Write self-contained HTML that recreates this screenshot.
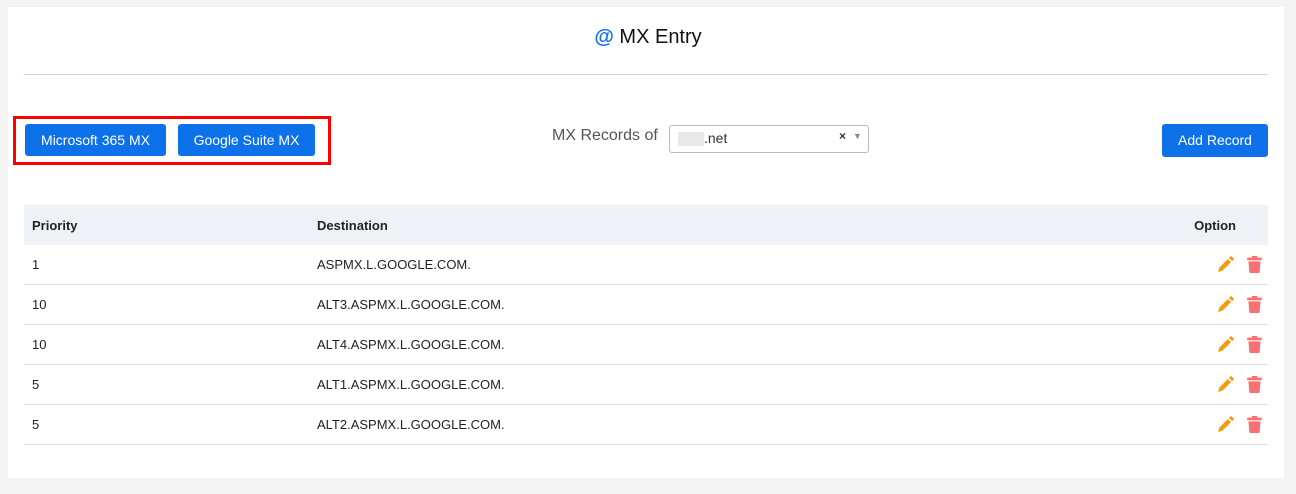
<!DOCTYPE html>
<html><head><style>
body{margin:0;background:#f4f4f5;font-family:"Liberation Sans",sans-serif;width:1296px;height:494px;position:relative;overflow:hidden}
.card{position:absolute;left:8px;top:7px;width:1276px;height:471px;background:#fff}
.title{position:absolute;left:0;width:1296px;top:26px;text-align:center;font-size:20px;color:#111}
.title b{color:#0d6efd;font-weight:bold}
.hr{position:absolute;left:24px;top:74px;width:1244px;height:1px;background:#c8d6ea}
.redbox{position:absolute;left:13px;top:116px;width:312px;height:43px;border:3px solid #f00}
.btn{position:absolute;background:#0d72ea;color:#fff;font-size:14px;border-radius:3px;text-align:center;line-height:32px;height:32px}
.lbl{position:absolute;left:552px;top:127px;font-size:16px;color:#555}
.sel{position:absolute;left:669px;top:125px;width:198px;height:26px;border:1px solid #bbb;border-radius:3px;font-size:14px;color:#333}
table{position:absolute;left:24px;top:205px;width:1244px;border-collapse:collapse;font-size:13px;color:#222}
th{background:#eef1f6;height:40px;text-align:left;font-weight:bold;font-size:13px;padding:0 8px}
td{height:39px;border-bottom:1px solid #e3e3e3;padding:0 8px}
.opt{text-align:right;padding-right:6px}
</style></head><body>
<div class="card"></div>
<div class="title"><b>@</b> MX Entry</div>
<div class="hr"></div>
<div class="redbox"></div>
<div class="btn" style="left:25px;top:124px;width:141px">Microsoft 365 MX</div>
<div class="btn" style="left:178px;top:124px;width:137px">Google Suite MX</div>
<div class="lbl">MX Records of</div>
<div class="sel"><span style="position:absolute;left:8px;top:6px;width:26px;height:14px;background:#e8e8e8"></span><span style="position:absolute;left:34px;top:4px">.net</span><span style="position:absolute;left:169px;top:3px;font-size:12px;font-weight:bold">×</span><span style="position:absolute;left:183px;top:5px;font-size:9px;color:#888">▼</span></div>
<div class="btn" style="left:1162px;top:124px;width:106px;height:33px;line-height:33px">Add Record</div>
<table>
<tr><th style="width:269px">Priority</th><th>Destination</th><th style="text-align:right;padding-right:32px">Option</th></tr>
<tr><td>1</td><td>ASPMX.L.GOOGLE.COM.</td><td class="opt">ICONS</td></tr>
<tr><td>10</td><td>ALT3.ASPMX.L.GOOGLE.COM.</td><td class="opt">ICONS</td></tr>
<tr><td>10</td><td>ALT4.ASPMX.L.GOOGLE.COM.</td><td class="opt">ICONS</td></tr>
<tr><td>5</td><td>ALT1.ASPMX.L.GOOGLE.COM.</td><td class="opt">ICONS</td></tr>
<tr><td>5</td><td>ALT2.ASPMX.L.GOOGLE.COM.</td><td class="opt">ICONS</td></tr>
</table>
<script>
var ic='<svg width="17" height="17" viewBox="0 0 16 16" style="vertical-align:middle"><path d="M1 15l1.2-4.2 8-8 3 3-8 8z" fill="#f39c12"/><path d="M11.2 1.8l1.3-1.3a1 1 0 0 1 1.4 0l1.6 1.6a1 1 0 0 1 0 1.4l-1.3 1.3z" fill="#f39c12"/></svg><svg width="15" height="17" viewBox="0 0 14 16" style="vertical-align:middle;margin-left:13px"><rect x="0" y="1.5" width="14" height="2.5" rx="1" fill="#f87171"/><rect x="4.5" y="0" width="5" height="2" rx="0.5" fill="#f87171"/><path d="M1.3 5h11.4l-0.9 10a1 1 0 0 1-1 1H3.2a1 1 0 0 1-1-1z" fill="#f87171"/></svg>';
document.querySelectorAll('.opt').forEach(function(e){e.innerHTML=ic});
</script>
</body></html>
